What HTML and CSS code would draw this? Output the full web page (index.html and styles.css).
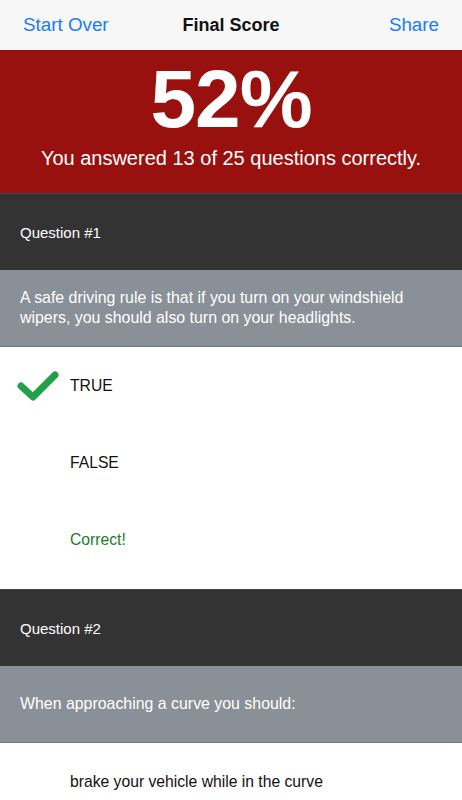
FILE: index.html
```html
<!DOCTYPE html>
<html lang="en">
<head>
    <meta charset="UTF-8">
    <meta name="viewport" content="width=device-width, initial-scale=1.0">
    <link rel="stylesheet" href="styles.css">
    <title>Final Score</title>
</head>
<body>

    <div class="nav">
        <span class="nav-link">Start Over</span>
        <span class="nav-title">Final Score</span>
        <span class="nav-link nav-link-right">Share</span>
    </div>

    <div class="score">
        <div class="score-percent">52%</div>
        <div class="score-text">You answered 13 of 25 questions correctly.</div>
    </div>

    <div class="question">
        <div class="question-header">Question #1</div>
        <div class="question-body">A safe driving rule is that if you turn on your windshield wipers, you should also turn on your headlights.</div>
        <div class="answers">
            <div class="answer">
                <div class="answer-mark">
                    <svg viewBox="0 0 44 34" width="44" height="34">
                        <path d="M5 17 L17 28 L39 6" fill="none" stroke="#22a04a" stroke-width="7" stroke-linecap="round" stroke-linejoin="round"/>
                    </svg>
                </div>
                <div class="answer-text">TRUE</div>
            </div>
            <div class="answer">
                <div class="answer-mark"></div>
                <div class="answer-text">FALSE</div>
            </div>
            <div class="answer">
                <div class="answer-mark"></div>
                <div class="answer-text answer-result">Correct!</div>
            </div>
        </div>
    </div>

    <div class="question">
        <div class="question-header">Question #2</div>
        <div class="question-body">When approaching a curve you should:</div>
        <div class="answers">
            <div class="answer">
                <div class="answer-mark"></div>
                <div class="answer-text">brake your vehicle while in the curve</div>
            </div>
        </div>
    </div>

</body>
</html>
```

FILE: styles.css
```css
* {
    margin: 0;
    padding: 0;
    box-sizing: border-box;
}

body {
    width: 462px;
    height: 800px;
    overflow: hidden;
    font-family: "Liberation Sans", Arial, sans-serif;
    background-color: white;
}

.nav {
    height: 50px;
    display: grid;
    grid-template-columns: 1fr auto 1fr;
    align-items: center;
    padding: 0 23px;
    background-color: #f7f7f7;
}
.nav-link {
    font-size: 18.8px;
    color: #1a7cf5;
}
.nav-link-right {
    text-align: right;
}
.nav-title {
    font-size: 18px;
    font-weight: bold;
    color: #111;
}

.score {
    height: 143px;
    background-color: #98110f;
    color: white;
    display: flex;
    flex-direction: column;
    align-items: center;
    padding-top: 3px;
}
.score-percent {
    font-size: 82px;
    font-weight: bold;
    line-height: 92px;
    letter-spacing: -1px;
}
.score-text {
    font-size: 20px;
    line-height: 22px;
    margin-top: 2px;
}

.question-header {
    height: 77px;
    display: flex;
    align-items: center;
    padding: 0 20px;
    background-color: #333;
    color: white;
    font-size: 15px;
    border-top: 1px solid #444;
}
.question-body {
    height: 77px;
    display: flex;
    align-items: center;
    padding: 0 20px;
    background-color: #899097;
    color: white;
    font-size: 15.9px;
    line-height: 20px;
    border-bottom: 1px solid #70777e;
}
.answers {
    padding-bottom: 11px;
}
.answer {
    height: 77px;
    display: flex;
    align-items: center;
}
.answer-mark {
    width: 70px;
    display: flex;
    padding-left: 16px;
}
.answer-text {
    font-size: 15.7px;
    color: #111;
}
.answer-result {
    color: #1b7a2c;
}
```
